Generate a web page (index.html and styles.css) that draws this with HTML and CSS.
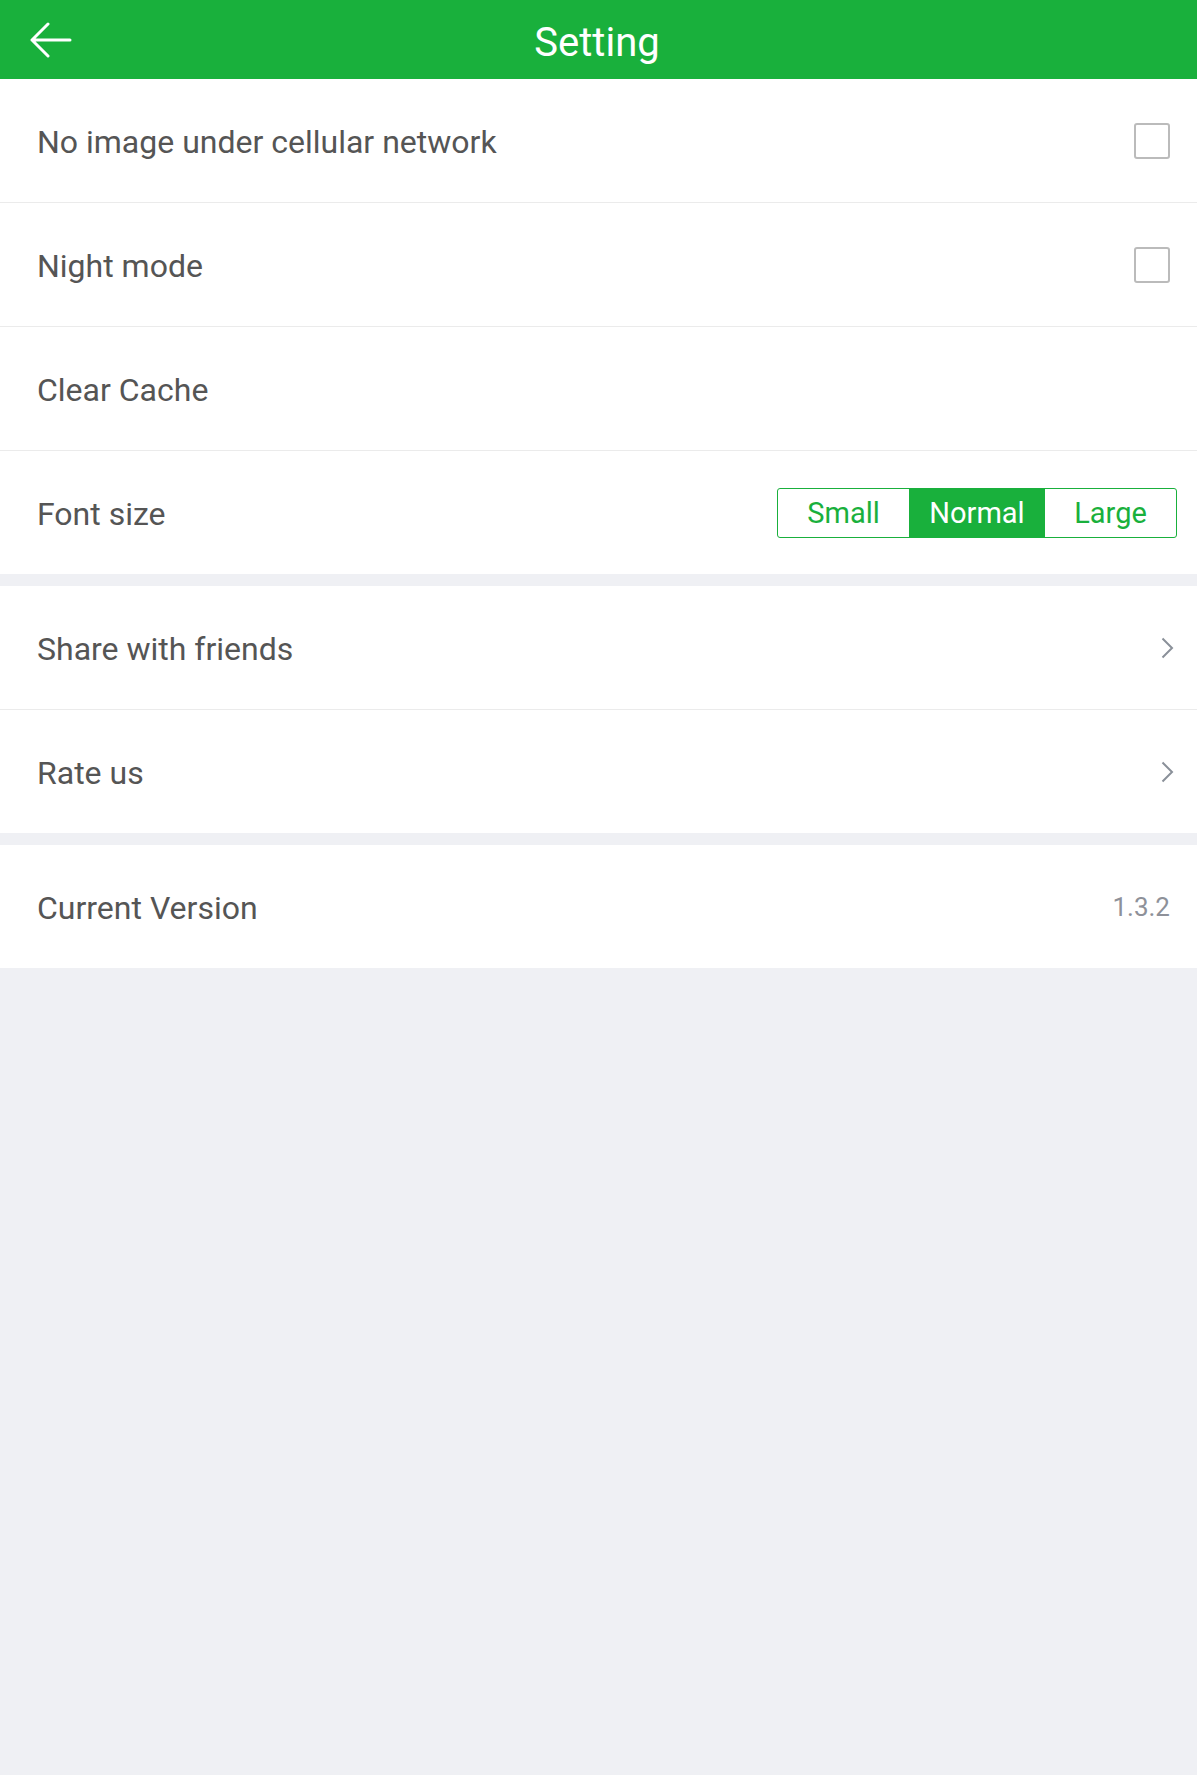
FILE: index.html
```html
<!DOCTYPE html>
<html>
<head>
<meta charset="utf-8">
<link rel="stylesheet" href="styles.css">
</head>
<body>
<header class="topbar">
  <svg class="back" width="42" height="36" viewBox="0 0 42 36"><path d="M40 18H2M18 2L2 18L18 34" fill="none" stroke="#fff" stroke-width="3" stroke-linecap="round" stroke-linejoin="round"/></svg>
  <h1 class="title">Setting</h1>
</header>
<section class="group">
  <div class="row"><span class="label">No image under cellular network</span><span class="check"></span></div>
  <div class="row"><span class="label">Night mode</span><span class="check"></span></div>
  <div class="row"><span class="label">Clear Cache</span></div>
  <div class="row"><span class="label">Font size</span>
    <div class="seg"><span class="opt">Small</span><span class="opt on">Normal</span><span class="opt">Large</span></div>
  </div>
</section>
<section class="group">
  <div class="row"><span class="label">Share with friends</span><svg class="chev" width="13" height="22" viewBox="0 0 13 22"><path d="M1.5 1.5L11 11L1.5 20.5" fill="none" stroke="#8a9099" stroke-width="2"/></svg></div>
  <div class="row"><span class="label">Rate us</span><svg class="chev" width="13" height="22" viewBox="0 0 13 22"><path d="M1.5 1.5L11 11L1.5 20.5" fill="none" stroke="#8a9099" stroke-width="2"/></svg></div>
</section>
<section class="group">
  <div class="row"><span class="label">Current Version</span><span class="ver">1.3.2</span></div>
</section>
</body>
</html>
```
FILE: styles.css
```css
html, body {
  margin: 0;
  padding: 0;
  background: #eff0f4;
  font-family: Roboto, "Noto Sans", sans-serif;
}
body {
  min-height: 1775px;
}
.topbar {
  height: 79px;
  background: #19b03c;
  display: flex;
  align-items: center;
  justify-content: center;
  position: relative;
}
.back {
  position: absolute;
  left: 30px;
  top: 22px;
}
.title {
  margin: 0;
  color: #fff;
  font-weight: 400;
  font-size: 40px;
  line-height: 1;
  padding-top: 6px;
  padding-right: 3px;
}
.group {
  background: #fff;
  margin-bottom: 12px;
}
.row {
  height: 123px;
  display: flex;
  align-items: center;
  justify-content: space-between;
  padding: 0 27px 0 37px;
  border-bottom: 1px solid #ebebeb;
}
.row:last-child {
  border-bottom: none;
}
.label {
  font-size: 32px;
  color: #555;
  padding-top: 2px;
}
.check {
  width: 32px;
  height: 32px;
  border: 2px solid #bbbbbb;
  border-radius: 3px;
}
.seg {
  display: flex;
  border: 1px solid #19b03c;
  border-radius: 3px;
  height: 48px;
  margin-right: -7px;
  overflow: hidden;
}
.opt {
  width: 131px;
  display: flex;
  align-items: center;
  justify-content: center;
  font-size: 29px;
  color: #19b03c;
}
.opt.on {
  width: 136px;
  background: #19b03c;
  color: #fff;
}
.chev {
  margin-right: -4px;
}
.ver {
  font-size: 26px;
  color: #8e9199;
}
```
